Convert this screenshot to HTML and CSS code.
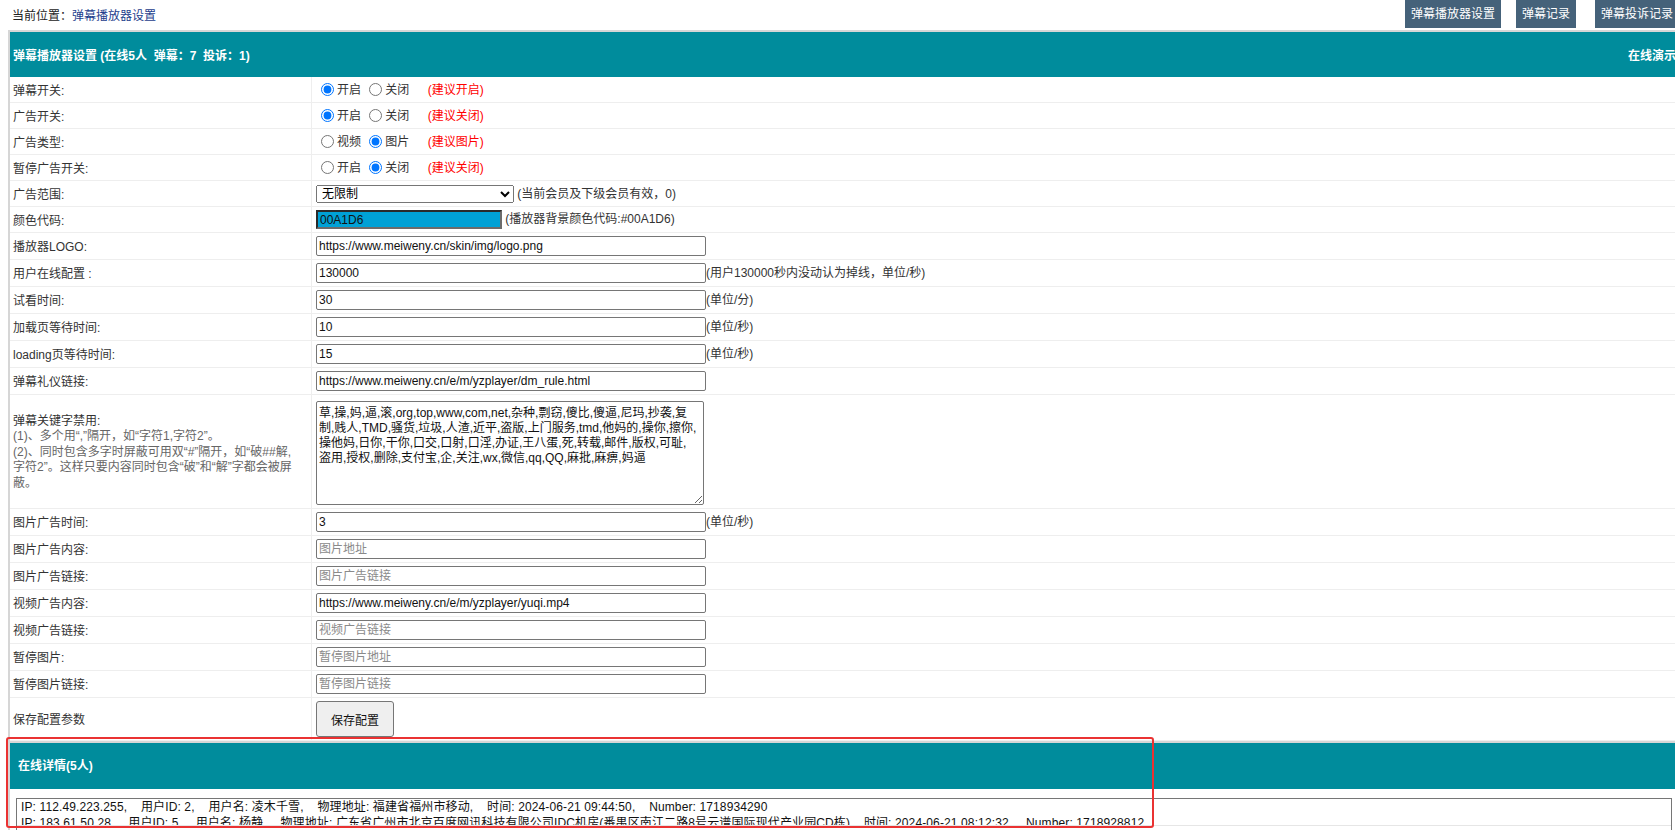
FILE: index.html
```html
<!DOCTYPE html>
<html lang="zh-CN">
<head>
<meta charset="utf-8">
<title>弹幕播放器设置</title>
<link rel="stylesheet" href="styles.css">
</head>
<body>
<div class="page">
  <div class="topbar">
    <div class="crumb">当前位置：<a href="#">弹幕播放器设置</a></div>
    <div class="actions">
      <a href="#" class="btn b1">弹幕播放器设置</a>
      <a href="#" class="btn b2">弹幕记录</a>
      <a href="#" class="btn">弹幕投诉记录</a>
    </div>
  </div>

  <table class="cfg">
    <tr>
      <th colspan="2" class="head">
        <div class="head-in">
          <span>弹幕播放器设置 (在线5人&nbsp;&nbsp;弹幕：7&nbsp;&nbsp;投诉：1)</span>
          <a href="#" class="demo">在线演示</a>
        </div>
      </th>
    </tr>
    <tr>
      <td class="l">弹幕开关:</td>
      <td class="r"><div class="cell"><input type="radio" name="dm" checked>开启 <input type="radio" name="dm">关闭 <span class="tip">(建议开启)</span></div></td>
    </tr>
    <tr>
      <td class="l">广告开关:</td>
      <td class="r"><div class="cell"><input type="radio" name="ad" checked>开启 <input type="radio" name="ad">关闭 <span class="tip">(建议关闭)</span></div></td>
    </tr>
    <tr>
      <td class="l">广告类型:</td>
      <td class="r"><div class="cell"><input type="radio" name="adt">视频 <input type="radio" name="adt" checked>图片 <span class="tip">(建议图片)</span></div></td>
    </tr>
    <tr>
      <td class="l">暂停广告开关:</td>
      <td class="r"><div class="cell"><input type="radio" name="pad">开启 <input type="radio" name="pad" checked>关闭 <span class="tip">(建议关闭)</span></div></td>
    </tr>
    <tr>
      <td class="l">广告范围:</td>
      <td class="r"><div class="cell cell-sel"><select class="sel"><option>无限制</option></select> <span class="hint">(当前会员及下级会员有效，0)</span></div></td>
    </tr>
    <tr>
      <td class="l">颜色代码:</td>
      <td class="r"><div class="cell"><input type="text" class="color" value="00A1D6"> <span class="hint">(播放器背景颜色代码:#00A1D6)</span></div></td>
    </tr>
    <tr>
      <td class="l">播放器LOGO:</td>
      <td class="r"><div class="cell cell-in"><input type="text" class="txt" value="https://www.meiweny.cn/skin/img/logo.png"></div></td>
    </tr>
    <tr>
      <td class="l">用户在线配置 :</td>
      <td class="r"><div class="cell cell-in"><input type="text" class="txt" value="130000"><span class="hint">(用户130000秒内没动认为掉线，单位/秒)</span></div></td>
    </tr>
    <tr>
      <td class="l">试看时间:</td>
      <td class="r"><div class="cell cell-in"><input type="text" class="txt" value="30"><span class="hint">(单位/分)</span></div></td>
    </tr>
    <tr>
      <td class="l">加载页等待时间:</td>
      <td class="r"><div class="cell cell-in"><input type="text" class="txt" value="10"><span class="hint">(单位/秒)</span></div></td>
    </tr>
    <tr>
      <td class="l">loading页等待时间:</td>
      <td class="r"><div class="cell cell-in"><input type="text" class="txt" value="15"><span class="hint">(单位/秒)</span></div></td>
    </tr>
    <tr>
      <td class="l">弹幕礼仪链接:</td>
      <td class="r"><div class="cell cell-in"><input type="text" class="txt" value="https://www.meiweny.cn/e/m/yzplayer/dm_rule.html"></div></td>
    </tr>
    <tr>
      <td class="l multi"><span class="dark">弹幕关键字禁用:</span><br>(1)、多个用“,”隔开，如“字符1,字符2”。<br>(2)、同时包含多字时屏蔽可用双“#”隔开，如“破##解,<br>字符2”。这样只要内容同时包含“破”和“解”字都会被屏<br>蔽。</td>
      <td class="r"><textarea class="area">草,操,妈,逼,滚,org,top,www,com,net,杂种,剽窃,傻比,傻逼,尼玛,抄袭,复
制,贱人,TMD,骚货,垃圾,人渣,近平,盗版,上门服务,tmd,他妈的,操你,擦你,
操他妈,日你,干你,口交,口射,口淫,办证,王八蛋,死,转载,邮件,版权,可耻,
盗用,授权,删除,支付宝,企,关注,wx,微信,qq,QQ,麻批,麻痹,妈逼</textarea></td>
    </tr>
    <tr>
      <td class="l">图片广告时间:</td>
      <td class="r"><div class="cell cell-in"><input type="text" class="txt" value="3"><span class="hint">(单位/秒)</span></div></td>
    </tr>
    <tr>
      <td class="l">图片广告内容:</td>
      <td class="r"><div class="cell cell-in"><input type="text" class="txt" placeholder="图片地址"></div></td>
    </tr>
    <tr>
      <td class="l">图片广告链接:</td>
      <td class="r"><div class="cell cell-in"><input type="text" class="txt" placeholder="图片广告链接"></div></td>
    </tr>
    <tr>
      <td class="l">视频广告内容:</td>
      <td class="r"><div class="cell cell-in"><input type="text" class="txt" value="https://www.meiweny.cn/e/m/yzplayer/yuqi.mp4"></div></td>
    </tr>
    <tr>
      <td class="l">视频广告链接:</td>
      <td class="r"><div class="cell cell-in"><input type="text" class="txt" placeholder="视频广告链接"></div></td>
    </tr>
    <tr>
      <td class="l">暂停图片:</td>
      <td class="r"><div class="cell cell-in"><input type="text" class="txt" placeholder="暂停图片地址"></div></td>
    </tr>
    <tr>
      <td class="l">暂停图片链接:</td>
      <td class="r"><div class="cell cell-in"><input type="text" class="txt" placeholder="暂停图片链接"></div></td>
    </tr>
    <tr>
      <td class="l">保存配置参数</td>
      <td class="r"><button class="save">保存配置</button></td>
    </tr>
  </table>

  <div class="online">
    <div class="online-head">在线详情(5人)</div>
    <div class="online-box">
      <div class="entries">
        <p class="entry">IP: 112.49.223.255,    用户ID: 2,    用户名: 凌木千雪,    物理地址: 福建省福州市移动,    时间: 2024-06-21 09:44:50,    Number: 1718934290</p>
        <p class="entry">IP: 183.61.50.28,    用户ID: 5,    用户名: 杨静,    物理地址: 广东省广州市北京百度网讯科技有限公司IDC机房(番禺区南江二路8号云谱国际现代产业园CD栋)    时间: 2024-06-21 08:12:32,    Number: 1718928812</p>
      </div>
    </div>
  </div>

  <div class="mark"></div>
</div>
</body>
</html>
```

FILE: styles.css
```css
html, body {
  margin: 0;
  padding: 0;
  overflow: hidden;
}
body {
  font-family: "Liberation Sans", "Noto Sans CJK SC", sans-serif;
  font-size: 12px;
  color: #333;
  background: #fff;
}
.page {
  width: 1680px;
  margin-left: 8px;
  position: relative;
}
.topbar {
  height: 30px;
  display: flex;
  justify-content: space-between;
  align-items: flex-start;
}
.crumb {
  padding: 2px 0 0 4px;
  line-height: 28px;
  color: #222;
}
.crumb a {
  color: #1d3d8c;
  text-decoration: none;
}
.actions {
  display: flex;
  margin-right: 9px;
}
.btn {
  display: block;
  height: 28px;
  line-height: 29px;
  padding: 0 6px;
  background: #45627a;
  color: #fff;
  text-decoration: none;
}
.b1 { margin-right: 15px; }
.b2 { margin-right: 19px; }

.cfg {
  width: 100%;
  border: 2px solid #d6d6d6;
  border-spacing: 0;
  border-collapse: separate;
}
.head {
  height: 45px;
  padding: 0 10px 0 3px;
  background: #008c9c;
  color: #fff;
  font-weight: bold;
  text-align: left;
}
.head-in {
  display: flex;
  justify-content: space-between;
  align-items: center;
}
.demo {
  color: #fff;
  text-decoration: none;
}
.cfg td {
  border-bottom: 1px solid #eee;
  padding: 3px 4px;
  vertical-align: middle;
}
.cfg td.l {
  width: 295px;
  padding: 4px 3px 2px;
  border-right: 1px solid #eee;
  line-height: 18px;
  color: #333;
}
.cfg td.multi {
  padding: 4px 3px 2px;
  line-height: 15.5px;
  color: #666;
}
.dark { color: #333; }
.cell {
  height: 19px;
  line-height: 19px;
  white-space: nowrap;
}
.cell-sel {
  padding-top: 1px;
  height: 18px;
  line-height: 18px;
}
.cell-in {
  height: 20px;
  line-height: 20px;
}
.cell input[type=radio] {
  width: 13px;
  height: 13px;
  margin: 3px 3px 0 5px;
  vertical-align: -2px;
}
.tip {
  color: #f00;
  margin-left: 15px;
}
.hint {
  color: #333;
}
.sel {
  width: 198px;
  height: 18px;
  font-family: inherit;
  font-size: 12px;
  padding: 0 1px;
  vertical-align: top;
}
.color {
  box-sizing: border-box;
  width: 186px;
  height: 19px;
  padding: 0 2px;
  background: #00a1d6;
  border-width: 2px;
  border-style: solid;
  border-color: #2a2a2a #6c6c6c #6c6c6c #2a2a2a;
  font-family: inherit;
  font-size: 12px;
  color: #111;
  vertical-align: top;
}
.txt {
  box-sizing: border-box;
  width: 390px;
  height: 20px;
  padding: 1px 2px;
  border: 1px solid #767676;
  border-radius: 2px;
  font-family: inherit;
  font-size: 12px;
  color: #111;
  vertical-align: top;
}
.txt::placeholder {
  color: #8a8a8a;
}
.area {
  display: block;
  box-sizing: border-box;
  width: 388px;
  height: 104px;
  margin-top: 3px;
  padding: 4px 2px;
  border: 1px solid #767676;
  border-radius: 2px;
  font-family: inherit;
  font-size: 12px;
  line-height: 15px;
  color: #111;
  white-space: pre;
  overflow: hidden;
  resize: both;
}
.save {
  box-sizing: border-box;
  width: 78px;
  height: 36px;
  border: 1px solid #767676;
  border-radius: 3px;
  background: #efefef;
  font-family: inherit;
  font-size: 12px;
  color: #111;
  display: block;
}

.online {
  border: 2px solid #d6d6d6;
  border-top: none;
  border-bottom: none;
}
.online-head {
  height: 46px;
  line-height: 46px;
  padding-left: 8px;
  background: #008c9c;
  color: #fff;
  font-weight: bold;
}
.online-box {
  margin: 9px 0 0 6px;
  width: 1656px;
  box-sizing: border-box;
  border: 1px solid #767676;
  border-bottom: none;
  padding: 0 4px;
  height: 60px;
}
.entries {
  height: 26px;
  overflow: hidden;
  border-bottom: 1px solid #e6e6e6;
  margin: 0 -4px;
  padding: 0 4px;
}
.entry {
  margin: 0;
  line-height: 16px;
  white-space: pre;
  color: #111;
  letter-spacing: 0.12px;
}
.mark {
  position: absolute;
  left: -2px;
  top: 737px;
  width: 1148px;
  height: 91px;
  box-sizing: border-box;
  border: 2px solid #ea3232;
  border-radius: 3px;
  pointer-events: none;
}
```
